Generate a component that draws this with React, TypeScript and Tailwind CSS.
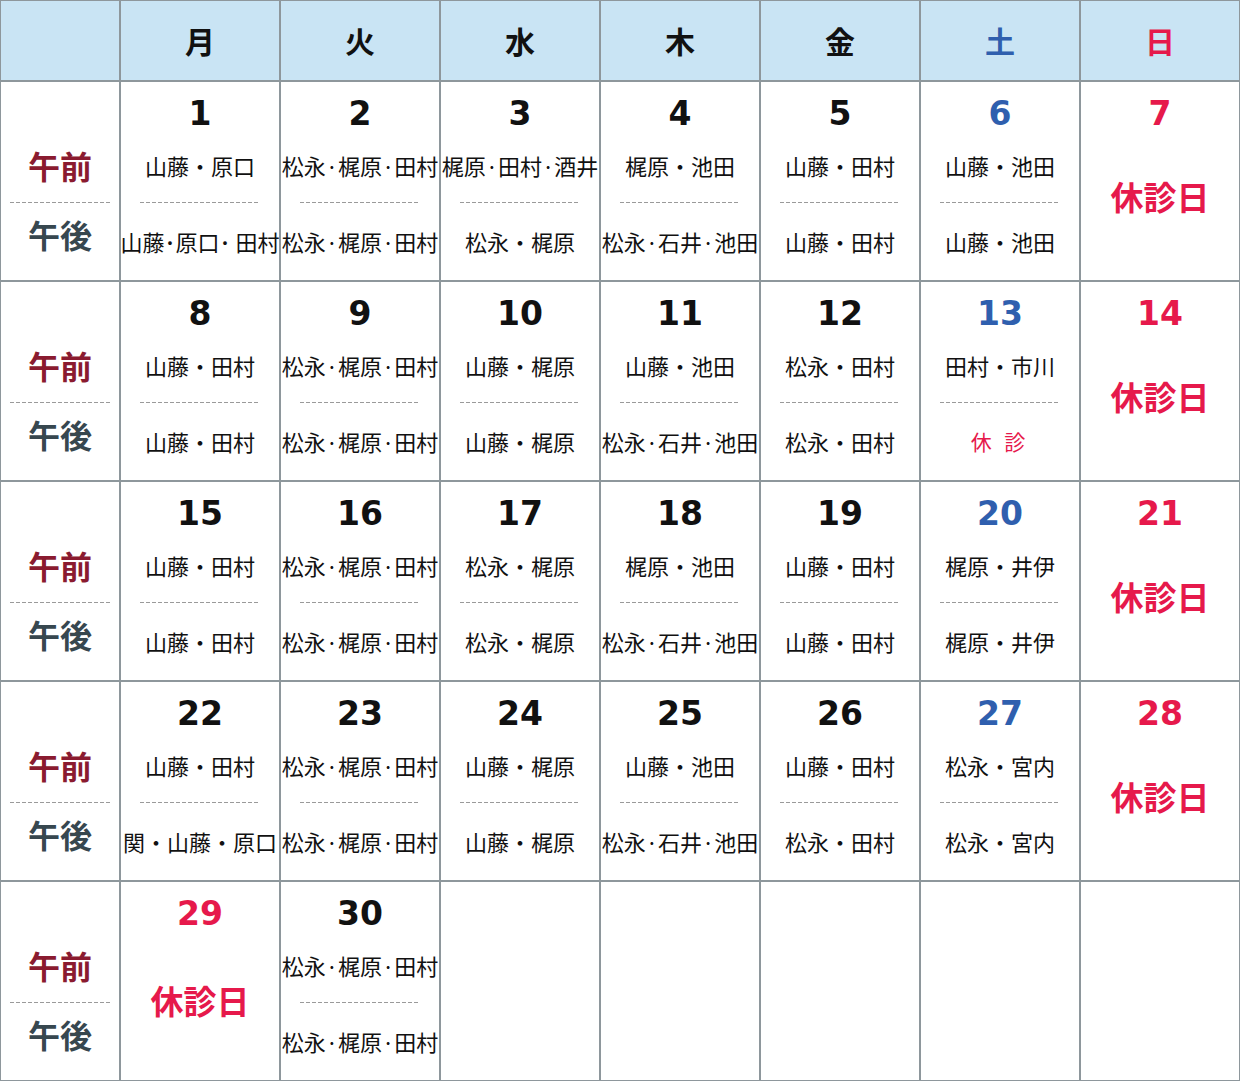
type Day = {
  d?: number;
  am?: string;
  pm?: string;
  off?: boolean; // 休診日
  pmOff?: boolean; // 午後のみ休診
  tone?: 'sat' | 'sun';
};

const weekdays = ['月', '火', '水', '木', '金', '土', '日'];

const weeks: Day[][] = [
  [
    { d: 1, am: '山藤・原口', pm: '山藤･原口･ 田村' },
    { d: 2, am: '松永·梶原·田村', pm: '松永·梶原·田村' },
    { d: 3, am: '梶原·田村·酒井', pm: '松永・梶原' },
    { d: 4, am: '梶原・池田', pm: '松永·石井·池田' },
    { d: 5, am: '山藤・田村', pm: '山藤・田村' },
    { d: 6, am: '山藤・池田', pm: '山藤・池田', tone: 'sat' },
    { d: 7, off: true, tone: 'sun' },
  ],
  [
    { d: 8, am: '山藤・田村', pm: '山藤・田村' },
    { d: 9, am: '松永·梶原·田村', pm: '松永·梶原·田村' },
    { d: 10, am: '山藤・梶原', pm: '山藤・梶原' },
    { d: 11, am: '山藤・池田', pm: '松永·石井·池田' },
    { d: 12, am: '松永・田村', pm: '松永・田村' },
    { d: 13, am: '田村・市川', pmOff: true, tone: 'sat' },
    { d: 14, off: true, tone: 'sun' },
  ],
  [
    { d: 15, am: '山藤・田村', pm: '山藤・田村' },
    { d: 16, am: '松永·梶原·田村', pm: '松永·梶原·田村' },
    { d: 17, am: '松永・梶原', pm: '松永・梶原' },
    { d: 18, am: '梶原・池田', pm: '松永·石井·池田' },
    { d: 19, am: '山藤・田村', pm: '山藤・田村' },
    { d: 20, am: '梶原・井伊', pm: '梶原・井伊', tone: 'sat' },
    { d: 21, off: true, tone: 'sun' },
  ],
  [
    { d: 22, am: '山藤・田村', pm: '関・山藤・原口' },
    { d: 23, am: '松永·梶原·田村', pm: '松永·梶原·田村' },
    { d: 24, am: '山藤・梶原', pm: '山藤・梶原' },
    { d: 25, am: '山藤・池田', pm: '松永·石井·池田' },
    { d: 26, am: '山藤・田村', pm: '松永・田村' },
    { d: 27, am: '松永・宮内', pm: '松永・宮内', tone: 'sat' },
    { d: 28, off: true, tone: 'sun' },
  ],
  [
    { d: 29, off: true, tone: 'sun' },
    { d: 30, am: '松永·梶原·田村', pm: '松永·梶原·田村' },
    {},
    {},
    {},
    {},
    {},
  ],
];

const jp = "font-['Noto_Sans_CJK_JP',sans-serif]";
const num = "font-['DejaVu_Sans','Noto_Sans_CJK_JP',sans-serif]";

function Dash({ w }: { w: string }) {
  return <div className={`${w} h-px bg-[repeating-linear-gradient(90deg,#9a9a9a_0_4px,transparent_4px_6px)]`} />;
}

function DayCell({ day, last }: { day: Day; last: boolean }) {
  if (day.d === undefined) return <div className="bg-white" />;
  const numColor =
    day.tone === 'sat' ? 'text-[#2f5fae]' : day.tone === 'sun' ? 'text-[#e6194b]' : 'text-[#111]';

  return (
    <div className="bg-white flex flex-col items-center">
      <div className={`h-[63px] leading-[63px] text-[33px] font-bold ${num} ${numColor}`}>{day.d}</div>
      {day.off ? (
        <div
          className={`${last ? 'mt-[31px]' : 'mt-[27px]'} h-[48px] leading-[48px] text-[33px] font-bold ${jp} text-[#e6194b]`}
        >
          休診日
        </div>
      ) : (
        <>
          <div className={`-mt-[2px] h-[44px] leading-[44px] text-[22px] whitespace-nowrap ${jp} text-[#111]`}>
            {day.am}
          </div>
          <div className="mt-[15px]">
            <Dash w="w-[120px]" />
          </div>
          {day.pmOff ? (
            <div className={`h-[76px] leading-[76px] text-[21px] ${jp} text-[#e6194b] tracking-[4px]`}>休 診</div>
          ) : (
            <div className={`h-[76px] leading-[76px] text-[22px] whitespace-nowrap ${jp} text-[#111]`}>{day.pm}</div>
          )}
        </>
      )}
    </div>
  );
}

export default function App() {
  return (
    <div className="w-[1240px] h-[1081px] bg-[#8e979c] p-[1px] grid grid-cols-[118px_repeat(7,158px)] grid-rows-[79px_repeat(5,198px)] gap-[2px]">
      <div className="bg-[#c9e4f4]" />
      {weekdays.map((w, i) => (
        <div
          key={w}
          className={`bg-[#c9e4f4] flex items-center justify-center text-[30px] font-bold ${jp} ${
            i === 5 ? 'text-[#2f5fae]' : i === 6 ? 'text-[#e6194b]' : 'text-[#111]'
          }`}
        >
          {w}
        </div>
      ))}

      {weeks.map((week, r) => (
        <>
          <div key={`l${r}`} className={`bg-white flex flex-col items-center ${jp}`}>
            <div className="mt-[59px] h-[48px] leading-[48px] text-[32px] font-bold text-[#8a1b30]">午前</div>
            <div className="mt-[13px]">
              <Dash w="w-[100px]" />
            </div>
            <div className="-mt-[3px] h-[68px] leading-[68px] text-[32px] font-bold text-[#37474f]">午後</div>
          </div>
          {week.map((day, c) => (
            <DayCell key={`${r}-${c}`} day={day} last={r === weeks.length - 1} />
          ))}
        </>
      ))}
    </div>
  );
}
